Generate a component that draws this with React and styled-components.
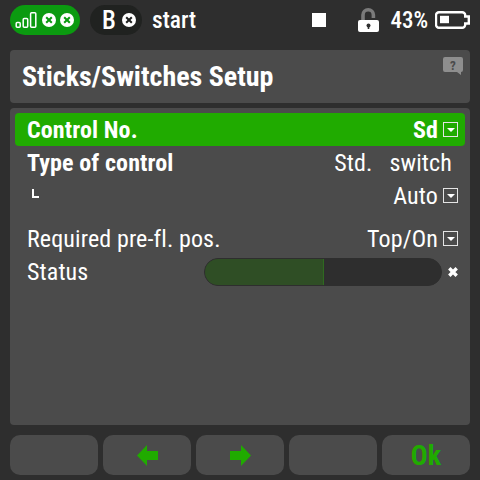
import React from "react";
import styled, { createGlobalStyle } from "styled-components";

const GREEN = "#20ab00";

const GlobalStyle = createGlobalStyle`
  html, body {
    margin: 0;
    padding: 0;
    background: #2e2e2e;
  }
  body {
    font-family: "Roboto", "Liberation Sans", sans-serif;
    font-stretch: 75%;
    color: #fff;
  }
`;

const Screen = styled.div`
  box-sizing: border-box;
  display: flex;
  flex-direction: column;
  height: 480px;
  padding: 5px 10px;
  width: 480px;
`;

const TopBar = styled.header`
  align-items: center;
  display: flex;
  height: 30px;
  margin-bottom: 15px;
`;

const RadioPill = styled.div`
  align-items: center;
  background: #0b9a10;
  border-radius: 15px;
  box-sizing: border-box;
  display: flex;
  gap: 5px;
  height: 30px;
  padding: 0 0 0 5px;
  width: 70px;
`;

const DotPair = styled.div`
  align-items: center;
  display: flex;
  gap: 4px;
`;

const ModePill = styled.div`
  align-items: center;
  background: #202220;
  border-radius: 15px;
  box-sizing: border-box;
  display: flex;
  height: 30px;
  margin-left: 10px;
  padding: 0 0 0 12px;
  width: 52px;
`;

const ModeLetter = styled.span`
  font-size: 25px;
  font-weight: 500;
  margin-right: 8px;
  width: 12px;
`;

const StatusText = styled.span`
  font-size: ${(p) => p.$size}px;
  font-weight: 500;
  margin-left: ${(p) => p.$left}px;
`;

const Spacer = styled.div`
  flex: 1;
`;

const StopSquare = styled.div`
  background: #fff;
  height: 14px;
  margin-right: 32px;
  width: 14px;
`;

const BatteryIcon = styled.svg`
  margin-left: 7px;
`;

const TitlePanel = styled.section`
  align-items: center;
  background: #4b4b4b;
  border-radius: 4px;
  display: flex;
  height: 53px;
  justify-content: space-between;
  margin-bottom: 5px;
  padding: 0 0 0 12px;
  position: relative;
`;

const Title = styled.h1`
  font-size: 28px;
  font-weight: 700;
  margin: 0;
`;

const HelpBubble = styled.svg`
  position: absolute;
  right: 7px;
  top: 7px;
`;

const MainPanel = styled.main`
  background: #4b4b4b;
  border-radius: 4px;
  box-sizing: border-box;
  flex: 1;
  padding: 5px;
`;

const Row = styled.div`
  align-items: center;
  background: ${(p) => (p.$active ? GREEN : "transparent")};
  border-radius: 4px;
  display: flex;
  font-size: 24px;
  font-weight: ${(p) => (p.$bold ? 700 : 400)};
  height: 33px;
  justify-content: space-between;
  letter-spacing: 0.12px;
  margin-top: ${(p) => p.$gap || 0}px;
  padding: 0 7px 0 12px;
`;

const RowValue = styled.div`
  align-items: center;
  display: flex;
  gap: 5px;
  margin-right: ${(p) => p.$right || 0}px;
  white-space: pre;
`;

const DropBox = styled.span`
  align-items: center;
  border: 1px solid #e4e4e4;
  box-sizing: border-box;
  display: flex;
  height: 15px;
  justify-content: center;
  width: 15px;

  &::after {
    border-left: 4px solid transparent;
    border-right: 4px solid transparent;
    border-top: 4px solid #fff;
    content: "";
    margin-top: 1px;
  }
`;

const Corner = styled.span`
  border-bottom: 2px solid #fff;
  border-left: 2px solid #fff;
  box-sizing: border-box;
  height: 9px;
  margin: -5px 0 0 5px;
  width: 7px;
`;

const Gauge = styled.div`
  background: #2e2e2e;
  border: 1px solid #2e2e2e;
  border-radius: 14px;
  box-sizing: border-box;
  height: 28px;
  overflow: hidden;
  width: 238px;
`;

const GaugeFill = styled.div`
  background: #2f4e25;
  border-right: 1px solid #2f6a20;
  box-sizing: border-box;
  height: 100%;
  width: 119px;
`;

const StatusCell = styled.div`
  align-items: center;
  display: flex;
  gap: 6px;
`;

const Footer = styled.footer`
  display: grid;
  gap: 5px;
  grid-template-columns: repeat(5, 1fr);
  height: 40px;
  margin-top: 10px;
`;

const FooterButton = styled.button`
  align-items: center;
  background: #4b4b4b;
  border: 0;
  border-radius: 10px;
  color: ${GREEN};
  display: flex;
  font-family: inherit;
  font-size: 28px;
  font-stretch: inherit;
  font-weight: 700;
  justify-content: center;
  padding: 0;
`;

const CloseDot = ({ color }) => (
  <svg width="14" height="14" viewBox="0 0 14 14">
    <circle cx="7" cy="7" r="7" fill="#fff" />
    <path d="M4.200 4.200l5.600 5.600M9.800 4.200l-5.600 5.600" stroke={color} strokeWidth="2" />
  </svg>
);

const SignalBars = () => (
  <svg width="22" height="16" viewBox="0 0 22 16" fill="none" stroke="#fff" strokeWidth="1.500">
    <rect x="1.200" y="10.600" width="4" height="4.600" rx="1" />
    <rect x="8.200" y="6.600" width="4.500" height="8.600" rx="1" />
    <rect x="15.600" y="0.800" width="5.200" height="14.400" rx="1" />
  </svg>
);

const Lock = () => (
  <svg width="21" height="24" viewBox="0 0 21 24">
    <path d="M5 12V7a5.200 5.200 0 0 1 10.400 0v3" fill="none" stroke="#7b7b7b" strokeWidth="3.600" />
    <rect x="0" y="12" width="21" height="12" rx="2" fill="#fff" />
    <circle cx="10.500" cy="17.500" r="2" fill="#2e2e2e" />
    <rect x="9.700" y="18" width="1.600" height="3" fill="#2e2e2e" />
  </svg>
);

const Battery = () => (
  <BatteryIcon width="35" height="18" viewBox="0 0 35 18">
    <path
      d="M4 1.200h23.200a3 3 0 0 1 3 3v1.300h3.600v7h-3.600v1.300a3 3 0 0 1-3 3H4a3 3 0 0 1-3-3V4.200a3 3 0 0 1 3-3z"
      fill="none"
      stroke="#fff"
      strokeWidth="2.400"
    />
    <rect x="5" y="4.800" width="9" height="7.400" fill="#fff" />
  </BatteryIcon>
);

const Arrow = ({ flip }) => (
  <svg width="21" height="21" viewBox="0 0 21 21" fill={GREEN}>
    <path d={flip ? "M0 6h11V0l10 10.500L11 21v-6H0z" : "M21 6H10V0L0 10.500 10 21v-6h11z"} />
  </svg>
);

const App = () => {
  return (
    <>
      <GlobalStyle />
      <Screen>
        <TopBar>
          <RadioPill>
            <SignalBars />
            <DotPair>
              <CloseDot color="#0b9a10" />
              <CloseDot color="#0b9a10" />
            </DotPair>
          </RadioPill>
          <ModePill>
            <ModeLetter>B</ModeLetter>
            <CloseDot color="#202220" />
          </ModePill>
          <StatusText $size={23.5} $left={10}>start</StatusText>
          <Spacer />
          <StopSquare />
          <Lock />
          <StatusText $size={23} $left={11}>43%</StatusText>
          <Battery />
        </TopBar>
        <TitlePanel>
          <Title>Sticks/Switches Setup</Title>
          <HelpBubble width="20" height="18" viewBox="0 0 20 18">
            <path d="M2 0h16a2 2 0 0 1 2 2v11a2 2 0 0 1-2 2v3l-4-3H2a2 2 0 0 1-2-2V2a2 2 0 0 1 2-2z" fill="#8e8e8e" />
            <text x="10" y="12.500" fontSize="13" fontWeight="700" textAnchor="middle" fill="#4b4b4b">?</text>
          </HelpBubble>
        </TitlePanel>
        <MainPanel>
          <Row $active $bold>
            <span>Control No.</span>
            <RowValue>Sd<DropBox /></RowValue>
          </Row>
          <Row>
            <strong>Type of control</strong>
            <RowValue $right={6}>Std.   switch</RowValue>
          </Row>
          <Row>
            <Corner />
            <RowValue>Auto<DropBox /></RowValue>
          </Row>
          <Row $gap={10}>
            <span>Required pre-fl. pos.</span>
            <RowValue>Top/On<DropBox /></RowValue>
          </Row>
          <Row>
            <span>Status</span>
            <StatusCell>
              <Gauge><GaugeFill /></Gauge>
              <svg width="10" height="10" viewBox="0 0 10 10">
                <path d="M1.300 1.300l7.400 7.400M8.700 1.300l-7.400 7.400" stroke="#fff" strokeWidth="3.400" />
              </svg>
            </StatusCell>
          </Row>
        </MainPanel>
        <Footer>
          <FooterButton />
          <FooterButton><Arrow /></FooterButton>
          <FooterButton><Arrow flip /></FooterButton>
          <FooterButton />
          <FooterButton>Ok</FooterButton>
        </Footer>
      </Screen>
    </>
  );
};

export default App;
